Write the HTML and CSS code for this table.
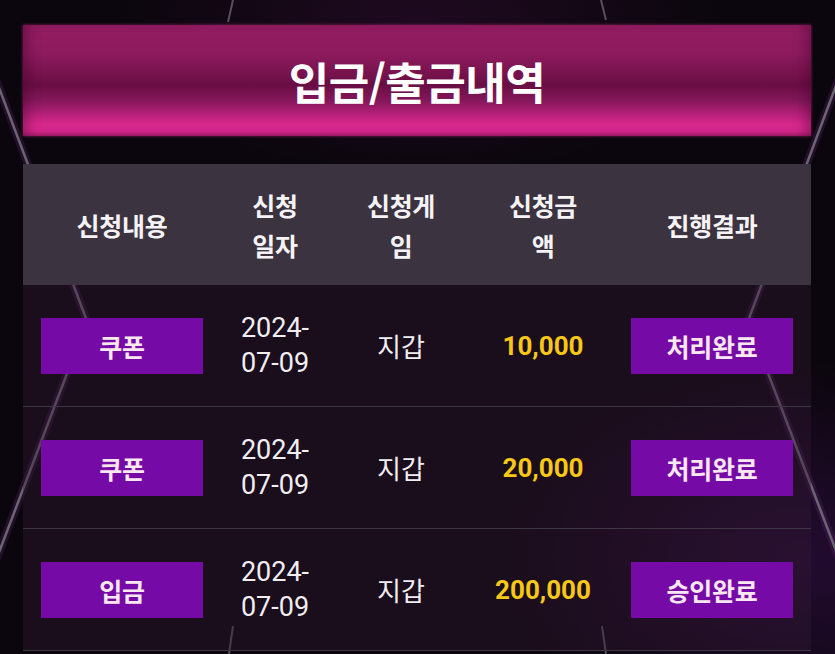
FILE: index.html
```html
<!DOCTYPE html>
<html lang="ko">
<head>
<meta charset="utf-8">
<title>입금/출금내역</title>
<link rel="stylesheet" href="styles.css">
</head>
<body>
<div class="page">
  <div class="title">입금/출금내역</div>
  <div class="table">
    <div class="thead">
      <div class="th">신청내용</div>
      <div class="th">신청<br>일자</div>
      <div class="th">신청게<br>임</div>
      <div class="th">신청금<br>액</div>
      <div class="th">진행결과</div>
    </div>
    <div class="row">
      <div class="cell"><span class="tag">쿠폰</span></div>
      <div class="cell date">2024-<br>07-09</div>
      <div class="cell game">지갑</div>
      <div class="cell amount">10,000</div>
      <div class="cell"><span class="tag">처리완료</span></div>
    </div>
    <div class="row">
      <div class="cell"><span class="tag">쿠폰</span></div>
      <div class="cell date">2024-<br>07-09</div>
      <div class="cell game">지갑</div>
      <div class="cell amount">20,000</div>
      <div class="cell"><span class="tag">처리완료</span></div>
    </div>
    <div class="row">
      <div class="cell"><span class="tag">입금</span></div>
      <div class="cell date">2024-<br>07-09</div>
      <div class="cell game">지갑</div>
      <div class="cell amount">200,000</div>
      <div class="cell"><span class="tag">승인완료</span></div>
    </div>
  </div>
</div>
</body>
</html>
```
FILE: styles.css
```css
html, body {
  margin: 0;
  height: 100%;
}
body {
  font-family: Roboto, "Noto Sans CJK KR", sans-serif;
  color: #f2eef4;
  overflow: hidden;
  background:
    url("data:image/svg+xml,%3Csvg xmlns='http://www.w3.org/2000/svg' width='835' height='654'%3E%3Cg fill='none' stroke='%236a2a80' stroke-width='8' opacity='.25'%3E%3Cpolyline points='-5,77 87,321 -5,563'/%3E%3Cpolyline points='840,75 748,321 840,561'/%3E%3C/g%3E%3Cg fill='none' stroke='%236a6670' stroke-width='2.5'%3E%3Cpolyline points='-5,77 87,321 -5,563'/%3E%3Cpolyline points='840,75 748,321 840,561'/%3E%3C/g%3E%3Cg stroke='%23908a98' stroke-width='2' opacity='.55'%3E%3Cline x1='233' y1='0' x2='228' y2='22'/%3E%3Cline x1='601' y1='0' x2='606' y2='20'/%3E%3Cline x1='229' y1='654' x2='233' y2='626'/%3E%3Cline x1='606' y1='654' x2='602' y2='626'/%3E%3C/g%3E%3C/svg%3E") no-repeat 0 0 / 835px 654px,
    radial-gradient(ellipse 300px 200px at 800px 560px, rgba(70, 20, 100, 0.4), transparent),
    radial-gradient(ellipse 300px 160px at 420px 20px, rgba(60, 15, 60, 0.4), transparent),
    #0b060d;
}
.page {
  padding: 25px 24px 0 23px;
}
.title {
  height: 111px;
  display: flex;
  align-items: center;
  justify-content: center;
  font-family: "Noto Sans CJK KR", sans-serif;
  font-weight: 700;
  font-size: 44px;
  color: #ffffff;
  letter-spacing: -0.5px;
  background: linear-gradient(to bottom,
    #931d62 0%,
    #8e1b5e 25%,
    #7c1451 40%,
    #690e44 54%,
    #84175a 68%,
    #b52078 80%,
    #d6288c 89%,
    #d4278b 96%,
    #a81c6e 100%);
  box-shadow: 0 0 3px rgba(210, 50, 140, 0.6), inset 12px 0 14px -8px rgba(60, 0, 40, 0.45), inset -12px 0 14px -8px rgba(60, 0, 40, 0.45);
}
.table {
  margin-top: 28px;
}
.thead,
.row {
  display: grid;
  grid-template-columns: 198px 108px 144px 140px 198px;
  align-items: center;
  text-align: center;
}
.thead {
  height: 121px;
  background: #3b3440;
}
.th {
  font-family: "Noto Sans CJK KR", sans-serif;
  font-weight: 700;
  font-size: 25px;
  line-height: 40px;
  letter-spacing: -0.3px;
  color: #f6f3f7;
}
.row {
  height: 121px;
  border-bottom: 1px solid #3d3643;
  background: rgba(52, 26, 52, 0.38);
}
.cell {
  display: flex;
  justify-content: center;
  align-items: center;
}
.date {
  font-size: 27px;
  line-height: 35px;
  color: #f1eef2;
}
.game {
  font-size: 26px;
  color: #f1eef2;
}
.amount {
  font-size: 26px;
  font-weight: 700;
  color: #f7c815;
}
.tag {
  width: 162px;
  height: 56px;
  display: flex;
  align-items: center;
  justify-content: center;
  background: #760aa7;
  font-family: "Noto Sans CJK KR", sans-serif;
  font-weight: 700;
  font-size: 25px;
  letter-spacing: -0.2px;
  color: #fbe7ef;
}
```
